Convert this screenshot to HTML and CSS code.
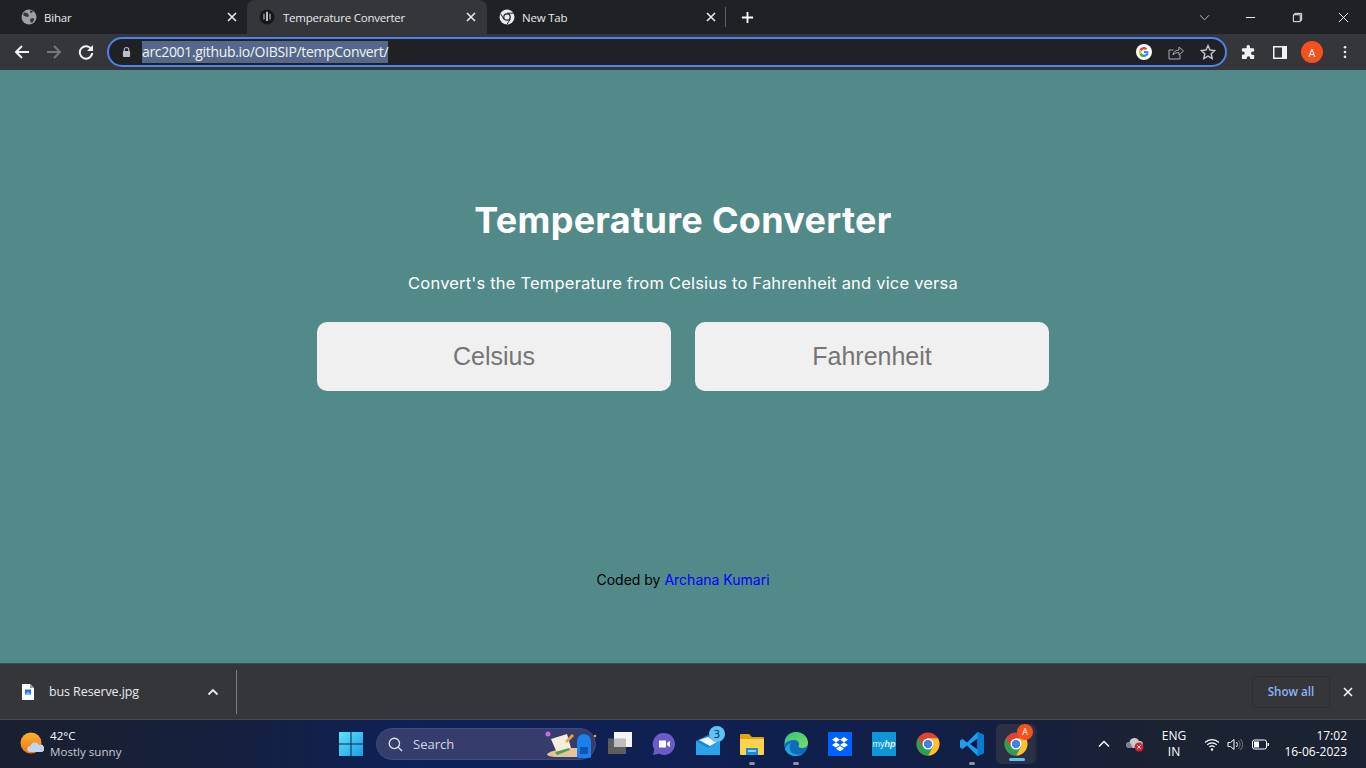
FILE: index.html
```html
<!DOCTYPE html>
<html lang="en">
<head>
    <meta charset="UTF-8">
    <meta name="viewport" content="width=device-width, initial-scale=1.0">
    <title>Temperature Converter</title>
    <link rel="stylesheet" href="styles.css">
</head>
<body>
    <svg class="defs" width="0" height="0" aria-hidden="true">
        <symbol id="chrome" viewBox="0 0 48 48">
            <circle cx="24" cy="24" r="23" fill="#db4437"/>
            <path d="M24 47a23 23 0 0 0 19.9-34.5H24l-2 0 10 17z" fill="#fbc02d"/>
            <path d="M4.1 12.5A23 23 0 0 0 24 47l10-17.5H14z" fill="#2e9e4f"/>
            <circle cx="24" cy="24" r="11" fill="#fff"/>
            <circle cx="24" cy="24" r="8.4" fill="#3f83ea"/>
        </symbol>
        <symbol id="close" viewBox="0 0 12 12">
            <path d="M2 2l8 8M10 2l-8 8" fill="none" stroke="currentColor" stroke-width="1.6"/>
        </symbol>
    </svg>

    <!-- tab strip -->
    <div class="tabstrip">
        <div class="tab tab-first">
            <svg class="favicon" viewBox="0 0 16 16">
                <circle cx="8" cy="8" r="7.5" fill="#9aa0a6"/>
                <path d="M3 3.5l3 .5 2 2-1 2-2.500-.5L2 6zM9 10l3-1 1.500 1.500L11 14l-1.500-1z M9 1.500l3 .5-1 2-2-.5z" fill="#35363a"/>
            </svg>
            <span class="tab-title">Bihar</span>
            <svg class="tab-close"><use href="#close"/></svg>
        </div>
        <div class="tab tab-active">
            <svg class="favicon" viewBox="0 0 16 16">
                <circle cx="8" cy="8" r="7.500" fill="#17181a"/>
                <path d="M7 3.500a1 1 0 0 1 2 0V12H7z" fill="#b9bbbd"/>
                <path d="M4 5.500a1 1 0 0 1 2 0v5H4zM10 5.500a1 1 0 0 1 2 0v5h-2z" fill="#6f7174"/>
            </svg>
            <span class="tab-title">Temperature Converter</span>
            <svg class="tab-close"><use href="#close"/></svg>
        </div>
        <div class="tab">
            <svg class="favicon" viewBox="0 0 16 16">
                <circle cx="8" cy="8" r="7.500" fill="#e8eaed"/>
                <circle cx="8" cy="8" r="3.800" fill="#202124"/>
                <circle cx="8" cy="8" r="2.600" fill="#e8eaed"/>
                <path d="M8 4.200h6.500M5 10.500L1.800 5M11.200 10L8 15.500" stroke="#202124" stroke-width="1"/>
            </svg>
            <span class="tab-title">New Tab</span>
            <svg class="tab-close"><use href="#close"/></svg>
        </div>
        <span class="tab-sep"></span>
        <svg class="new-tab" viewBox="0 0 14 14">
            <path d="M7 1v12M1 7h12" stroke="#fff" stroke-width="2"/>
        </svg>
        <div class="window-controls">
            <svg class="win-btn win-chevron" viewBox="0 0 12 12"><path d="M1 3.500l5 5 5-5" fill="none" stroke="#c4c6c9" stroke-width="1"/></svg>
            <svg class="win-btn win-min" viewBox="0 0 12 12"><path d="M1 6h10" stroke="#fff" stroke-width="1"/></svg>
            <svg class="win-btn win-max" viewBox="0 0 12 12"><path d="M3 3V1.500h7.500V9H9M1.500 3H9v7.500H1.500z" fill="none" stroke="#fff" stroke-width="1"/></svg>
            <svg class="win-btn win-x" viewBox="0 0 12 12"><path d="M1 1l10 10M11 1L1 11" stroke="#fff" stroke-width="1"/></svg>
        </div>
    </div>

    <!-- toolbar -->
    <div class="toolbar">
        <svg class="nav-icon nav-back" viewBox="0 0 16 16"><path d="M15 8H2M8 2L2 8l6 6" fill="none" stroke="#f1f3f4" stroke-width="2"/></svg>
        <svg class="nav-icon nav-forward" viewBox="0 0 16 16"><path d="M1 8h13M8 2l6 6-6 6" fill="none" stroke="#75777a" stroke-width="2"/></svg>
        <svg class="nav-icon nav-reload" viewBox="0 0 16 16"><path d="M13.500 5.500A6.200 6.200 0 1 0 14.200 9" fill="none" stroke="#f1f3f4" stroke-width="2"/><path d="M15 1v6H9z" fill="#f1f3f4"/></svg>
        <div class="omnibox">
            <svg class="lock" viewBox="0 0 10 12"><path d="M2.500 5V3.500a2.500 2.500 0 0 1 5 0V5" fill="none" stroke="#bdc1c6" stroke-width="1.200"/><rect x="1" y="5" width="8" height="6.500" rx="1" fill="#bdc1c6"/></svg>
            <span class="url">arc2001.github.io/OIBSIP/tempConvert/</span>
            <div class="omni-actions">
                <svg class="omni-google" viewBox="0 0 16 16">
                    <circle cx="8" cy="8" r="8" fill="#fff"/>
                    <path d="M12.200 7H8v1.900h2.500c-.3 1-1.200 1.700-2.500 1.700V13c1.500 0 2.700-.5 3.500-1.400.9-1 1.100-3 .7-4.600z" fill="#4285f4"/>
                    <path d="M8 10.600c-1.200 0-2.100-.7-2.500-1.700L3.500 10.400C4.300 12 6 13 8 13z" fill="#34a853"/>
                    <path d="M5.500 8.900c-.2-.6-.2-1.200 0-1.800L3.500 5.600c-.7 1.500-.7 3.300 0 4.800z" fill="#fbbc05"/>
                    <path d="M3.500 5.600l2 1.500C5.900 6.100 6.800 5.400 8 5.400c.7 0 1.300.2 1.800.7l1.500-1.500C10.400 3.600 9.300 3 8 3 6 3 4.300 4 3.500 5.600z" fill="#ea4335"/>
                </svg>
                <svg class="omni-icon" viewBox="0 0 16 16"><path d="M5.500 6H1v9h11v-4" fill="none" stroke="#a9acb0" stroke-width="1"/><path d="M5 11c.5-3.500 3-5 6-5V3l4.500 4-4.500 4V8.500c-2.500 0-4.500.7-6 2.500z" fill="none" stroke="#a9acb0" stroke-width="1"/></svg>
                <svg class="omni-icon" viewBox="0 0 16 16"><path d="M8 1.500l2 4.500 4.800.5-3.600 3.200 1 4.800L8 12.100l-4.200 2.400 1-4.800L1.200 6.500 6 6z" fill="none" stroke="#c4c7ca" stroke-width="1.400"/></svg>
            </div>
        </div>
        <svg class="tool-icon tool-puzzle" viewBox="0 0 16 16"><path d="M6 1.500a1.800 1.800 0 0 1 3.500 0V3.500H13a1 1 0 0 1 1 1V7h-1.500a1.800 1.800 0 0 0 0 3.600H14V14a1 1 0 0 1-1 1H9.800v-1.300a1.800 1.800 0 0 0-3.600 0V15H2a1 1 0 0 1-1-1v-3.500h1.200a1.800 1.800 0 0 0 0-3.600H1V4.500a1 1 0 0 1 1-1h4z" fill="#f1f3f4"/></svg>
        <svg class="tool-icon tool-side" viewBox="0 0 14 13"><path d="M0 0h14v13H0z" fill="#f1f3f4"/><path d="M1.500 1.500h7.500v10H1.500z" fill="#35363a"/></svg>
        <span class="avatar">A</span>
        <svg class="tool-menu" viewBox="0 0 4 16"><circle cx="2" cy="2.500" r="1.500" fill="#e8eaed"/><circle cx="2" cy="8" r="1.500" fill="#e8eaed"/><circle cx="2" cy="13.500" r="1.500" fill="#e8eaed"/></svg>
    </div>

    <!-- page -->
    <main class="page">
        <h1>Temperature Converter</h1>
        <p class="subtitle">Convert's the Temperature from Celsius to Fahrenheit and vice versa</p>
        <div class="inputs">
            <input class="temp-input" type="text" placeholder="Celsius">
            <input class="temp-input" type="text" placeholder="Fahrenheit">
        </div>
        <p class="credit">Coded by <a href="#">Archana Kumari</a></p>
    </main>

    <!-- downloads -->
    <div class="downloads">
        <div class="download-item">
            <svg class="file-icon" viewBox="0 0 12 16">
                <path d="M0 0h8l4 4v12H0z" fill="#fff"/>
                <path d="M8 0l4 4H8z" fill="#9aa0a6"/>
                <path d="M3 5.500h6v5H3z" fill="#1a73e8"/>
                <path d="M3 10.500l3-3 3 3z" fill="#8ab4f8"/>
            </svg>
            <span class="file-name">bus Reserve.jpg</span>
            <svg class="file-chevron" viewBox="0 0 12 8"><path d="M1.500 6.500L6 2l4.500 4.500" fill="none" stroke="#e8eaed" stroke-width="1.800"/></svg>
        </div>
        <button class="show-all">Show all</button>
        <svg class="downloads-close"><use href="#close"/></svg>
    </div>

    <!-- taskbar -->
    <div class="taskbar">
        <div class="weather">
            <svg class="weather-icon" viewBox="0 0 24 24">
                <defs><linearGradient id="sun" x1="0" y1="0" x2="0" y2="1"><stop offset="0" stop-color="#fbb034"/><stop offset="1" stop-color="#ea7a12"/></linearGradient></defs>
                <circle cx="11" cy="11" r="10.500" fill="url(#sun)"/>
                <path d="M10 20a3 3 0 0 1 .5-6 4.500 4.500 0 0 1 8.500-1 3.500 3.500 0 0 1 3 7z" fill="#c3d4ec"/>
            </svg>
            <div class="weather-text">
                <span class="weather-temp">42°C</span>
                <span class="weather-desc">Mostly sunny</span>
            </div>
        </div>

        <div class="task-center">
            <div class="task-cell">
                <svg class="task-icon" viewBox="0 0 24 24">
                    <defs><linearGradient id="win" x1="0" y1="0" x2="1" y2="1"><stop offset="0" stop-color="#5fe3f8"/><stop offset="1" stop-color="#1b9de6"/></linearGradient></defs>
                    <path d="M0 0h11.500v11.500H0zM12.500 0H24v11.500H12.500zM0 12.500h11.500V24H0zM12.500 12.500H24V24H12.500z" fill="url(#win)"/>
                </svg>
            </div>
            <div class="search-pill">
                <svg class="search-glass" viewBox="0 0 16 16"><circle cx="6.800" cy="6.800" r="5.500" fill="none" stroke="#dfe3ee" stroke-width="1.400"/><path d="M10.800 10.800L15 15" stroke="#dfe3ee" stroke-width="1.500"/></svg>
                <span class="search-label">Search</span>
                <svg class="search-art" viewBox="0 0 52 30">
                    <path d="M2 25c6-6 36-8 44-4v7H12C6 28 2 27 2 25z" fill="#e6c592"/>
                    <path d="M6 10l16-5 4 14-14 5z" fill="#f2efe0"/>
                    <path d="M10 23l14-4 1 2-13 5z" fill="#4f9e5c"/>
                    <path d="M20 12l7-7 2 2-7 7z" fill="#f2a13a"/>
                    <path d="M32 12a7 7 0 0 1 14 0v15a2 2 0 0 1-2 2H34a2 2 0 0 1-2-2z" fill="#1d7fe8"/>
                    <path d="M35 18h8v7h-8z" fill="#0f55b5"/>
                    <circle cx="3" cy="5" r="2.500" fill="#c56ce0"/>
                    <circle cx="50" cy="7" r="1.300" fill="#f2a13a"/>
                </svg>
            </div>
            <div class="task-cell task-view">
                <svg class="task-icon" viewBox="0 0 24 24">
                    <path d="M0 6.500h18V22H0z" fill="#5d5d5f"/>
                    <path d="M6 0h18v15H6z" fill="#f4f4f6"/>
                    <path d="M6 6.500h12V15H6z" fill="#bdbdc0"/>
                </svg>
            </div>
            <div class="task-cell">
                <svg class="task-icon" viewBox="0 0 24 24">
                    <path d="M12 1a11 11 0 1 1-5 20.800L1 23l1.300-5.400A11 11 0 0 1 12 1z" fill="#6a5cc4"/>
                    <path d="M7 8.500h7v7H7zM15 11l3-2.300v6.600L15 13z" fill="#fff"/>
                </svg>
            </div>
            <div class="task-cell">
                <svg class="task-icon" viewBox="0 0 24 24">
                    <path d="M0 9L12 3l12 6v14H0z" fill="#1787d8"/>
                    <path d="M3 8l9-3 9 5-7 4z" fill="#f2f6fa"/>
                    <path d="M0 9l12 7 12-7v14H0z" fill="#2ba3ea"/>
                </svg>
                <span class="mail-badge">3</span>
            </div>
            <div class="task-cell">
                <svg class="task-icon" viewBox="0 0 24 24">
                    <path d="M0 3a1 1 0 0 1 1-1h8l3 3h11a1 1 0 0 1 1 1v3H0z" fill="#e0a412"/>
                    <path d="M0 7h24v15a1 1 0 0 1-1 1H1a1 1 0 0 1-1-1z" fill="#fcd34d"/>
                    <path d="M6 16h12v7H6z" fill="#1e8ad6"/>
                    <path d="M8 18h8v2H8z" fill="#8fd0f5"/>
                </svg>
                <span class="running"></span>
            </div>
            <div class="task-cell">
                <svg class="task-icon" viewBox="0 0 24 24">
                    <defs><linearGradient id="edge" x1="0" y1="0" x2="1" y2="1"><stop offset="0" stop-color="#33c481"/><stop offset="1" stop-color="#7be05a"/></linearGradient></defs>
                    <circle cx="12" cy="12" r="12" fill="#0f6cbd"/>
                    <path d="M1 8C3 2 8 0 12 0c7 0 12 5 12 11 0 3-2.500 5-6 5-2 0-4-1-3.500-2 1-1 1-6-4-6C6 8 3 9 1 12z" fill="url(#edge)"/>
                    <path d="M11 22c-5-1-7-7-4-11-3 1-5 3-6 6 2 5 6 7 11 7 3 0 6-1 8-3-3 2-6 2-9 1z" fill="#1ea5e0"/>
                </svg>
                <span class="running"></span>
            </div>
            <div class="task-cell">
                <svg class="task-icon" viewBox="0 0 24 24">
                    <path d="M0 0h24v24H0z" fill="#0061fe"/>
                    <path d="M8 5L4 7.700l4 2.600 4-2.600zM16 5l-4 2.700 4 2.600 4-2.600zM8 10.300L4 13l4 2.600 4-2.600zM16 10.300L12 13l4 2.600 4-2.600zM8 16.700l4 2.600 4-2.600-4-2.600z" fill="#fff"/>
                </svg>
            </div>
            <div class="task-cell">
                <div class="myhp">my<em>hp</em></div>
            </div>
            <div class="task-cell">
                <svg class="task-icon"><use href="#chrome"/></svg>
            </div>
            <div class="task-cell">
                <svg class="task-icon" viewBox="0 0 24 24">
                    <path d="M17.500 0L24 3v18l-6.500 3L7 13.500l-4.500 3.500L0 15.500v-7L2.500 7 7 10.500z" fill="#1f9cf0"/>
                    <path d="M17.500 6.500L10 12l7.500 5.500z" fill="#0b1a45"/>
                    <path d="M17.500 0L24 3v18l-6.500 3z" fill="#0a7cd0"/>
                </svg>
                <span class="running"></span>
            </div>
            <div class="task-cell task-active">
                <svg class="task-icon"><use href="#chrome"/></svg>
                <span class="chrome-badge">A</span>
                <span class="running running-active"></span>
            </div>
        </div>

        <div class="tray">
            <svg class="tray-chevron" viewBox="0 0 12 8"><path d="M1 6.500L6 1.500l5 5" fill="none" stroke="#fff" stroke-width="1.400"/></svg>
            <svg class="tray-cloud" viewBox="0 0 18 16">
                <path d="M3 12a3 3 0 0 1 .5-6A5 5 0 0 1 13 5a3.500 3.500 0 0 1 1 7z" fill="#c7c9cd"/>
                <path d="M3 12a3 3 0 0 1 .5-6L7 12z" fill="#7d7f84"/>
                <circle cx="13" cy="11" r="4.500" fill="#d9202f"/>
                <path d="M11.300 9.300l3.400 3.400M14.700 9.300l-3.400 3.400" stroke="#fff" stroke-width="1"/>
            </svg>
            <div class="tray-lang"><span>ENG</span><span>IN</span></div>
            <svg class="tray-wifi" viewBox="0 0 16 13"><path d="M1 4.500a10 10 0 0 1 14 0M3.200 6.800a7 7 0 0 1 9.600 0M5.400 9a4 4 0 0 1 5.200 0" fill="none" stroke="#fff" stroke-width="1.100"/><circle cx="8" cy="11.500" r="1.200" fill="#fff"/></svg>
            <svg class="tray-sound" viewBox="0 0 16 13"><path d="M1 4.500h2.500L7 1.500v10L3.500 8.500H1z" fill="none" stroke="#fff" stroke-width="1"/><path d="M9.500 4a4 4 0 0 1 0 5" fill="none" stroke="#fff" stroke-width="1"/><path d="M11.500 2.500a6.500 6.500 0 0 1 0 8M13.500 1a9 9 0 0 1 0 11" fill="none" stroke="#77797e" stroke-width="1"/></svg>
            <svg class="tray-battery" viewBox="0 0 17 11"><rect x=".5" y="1" width="14" height="9" rx="2" fill="none" stroke="#fff"/><rect x="2" y="2.500" width="5" height="6" fill="#fff"/><path d="M15.500 4H17v3h-1.500z" fill="#fff"/></svg>
            <div class="tray-clock"><span>17:02</span><span>16-06-2023</span></div>
        </div>
    </div>
</body>
</html>
```

FILE: styles.css
```css
* {
    box-sizing: border-box;
}

html, body {
    margin: 0;
    height: 768px;
    overflow: hidden;
}

body {
    display: flex;
    flex-direction: column;
    font-family: "Open Sans", "Noto Sans", sans-serif;
    color: #fff;
    background-color: #528a8a;
}

.defs {
    position: absolute;
}

/* tab strip */
.tabstrip {
    display: flex;
    align-items: center;
    height: 34px;
    background-color: #202124;
    flex: none;
}

.tab {
    display: flex;
    align-items: center;
    width: 240px;
    height: 34px;
    padding: 0 10px 0 12px;
    font-size: 11.5px;
    letter-spacing: -0.22px;
    color: #e8eaed;
}

.tab-first {
    width: 247px;
    padding-left: 21px;
    padding-right: 9px;
}

.tab-active {
    background-color: #35363a;
    border-radius: 8px 8px 0 0;
}

.favicon {
    width: 16px;
    height: 16px;
    flex: none;
    margin-right: 7px;
}

.tab-active .favicon {
    margin-right: 8px;
}

.tab-title {
    flex: 1;
    white-space: nowrap;
}

.tab-close {
    width: 12px;
    height: 12px;
    color: #e8eaed;
    flex: none;
}

.tab-sep {
    width: 1px;
    height: 20px;
    background-color: #5f6368;
    margin-left: -2px;
}

.new-tab {
    width: 13px;
    height: 13px;
    margin-left: 15px;
}

.window-controls {
    display: flex;
    align-items: center;
    margin-left: auto;
}

.win-btn {
    width: 11px;
    height: 11px;
}

.win-chevron {
    margin-right: 35px;
}

.win-min {
    margin-right: 36px;
}

.win-max {
    margin-right: 35px;
}

.win-x {
    margin-right: 17px;
}

/* toolbar */
.toolbar {
    display: flex;
    align-items: center;
    height: 36px;
    padding-left: 14px;
    background-color: #35363a;
    flex: none;
}

.nav-icon {
    width: 16px;
    height: 16px;
    flex: none;
}

.nav-forward {
    margin-left: 16px;
}

.nav-reload {
    margin-left: 16px;
}

.omnibox {
    display: flex;
    align-items: center;
    width: 1120px;
    height: 30px;
    margin-left: 13px;
    padding-left: 13px;
    background-color: #202124;
    border: 2px solid #4b84ea;
    border-radius: 15px;
}

.lock {
    width: 9px;
    height: 12px;
    flex: none;
}

.url {
    margin-left: 11px;
    padding: 1px 0;
    font-size: 14px;
    line-height: 20px;
    letter-spacing: -0.33px;
    white-space: nowrap;
    color: #f1f3f4;
    background-color: #56688a;
}

.omni-actions {
    display: flex;
    align-items: center;
    gap: 16px;
    margin-left: auto;
    padding-right: 9px;
}

.omni-google {
    width: 16px;
    height: 16px;
}

.omni-icon {
    width: 16px;
    height: 16px;
}

.tool-icon {
    flex: none;
}

.tool-puzzle {
    width: 15px;
    height: 15px;
    margin-left: 14px;
}

.tool-side {
    width: 14px;
    height: 13px;
    margin-left: 17px;
}

.avatar {
    display: flex;
    align-items: center;
    justify-content: center;
    width: 22px;
    height: 22px;
    margin-left: 14px;
    border-radius: 50%;
    background-color: #f4511e;
    font-size: 11px;
    flex: none;
}

.tool-menu {
    width: 4px;
    height: 14px;
    margin-left: 20px;
    flex: none;
}

/* page */
.page {
    display: flex;
    flex-direction: column;
    align-items: center;
    flex: 1;
    padding-top: 128px;
    background-color: #528a8a;
    border-bottom: 1px solid #3f4a4a;
}

h1 {
    margin: 0;
    font-family: "Inter", "Open Sans", sans-serif;
    font-size: 36px;
    line-height: 44px;
    font-weight: 700;
    letter-spacing: 0.3px;
    color: #fff;
}

.subtitle {
    margin: 29px 0 0;
    font-family: "Inter", "Open Sans", sans-serif;
    font-size: 16.5px;
    line-height: 24px;
    font-weight: 400;
    letter-spacing: 0.2px;
    color: #fff;
}

.inputs {
    display: flex;
    gap: 24px;
    margin-top: 27px;
}

.temp-input {
    width: 354px;
    height: 69px;
    padding: 0;
    border: none;
    border-radius: 10px;
    background-color: #f0f0f0;
    font-family: "Liberation Sans", Arial, sans-serif;
    font-size: 25px;
    text-align: center;
}

.credit {
    margin: 179px 0 0;
    font-family: "Inter", "Open Sans", sans-serif;
    font-size: 14px;
    line-height: 20px;
    color: #000;
}

.credit a {
    color: #00f;
    text-decoration: none;
}

/* downloads */
.downloads {
    display: flex;
    align-items: center;
    height: 56px;
    background-color: #35363a;
    border-bottom: 1px solid #47484c;
    flex: none;
}

.download-item {
    display: flex;
    align-items: center;
    width: 237px;
    height: 44px;
    padding-left: 22px;
    border-right: 1px solid #7a7c80;
}

.file-icon {
    width: 12px;
    height: 16px;
    flex: none;
}

.file-name {
    margin-left: 15px;
    font-size: 12.5px;
    letter-spacing: -0.1px;
    color: #e8eaed;
    white-space: nowrap;
}

.file-chevron {
    width: 12px;
    height: 8px;
    margin-left: auto;
    margin-right: 17px;
}

.show-all {
    width: 78px;
    height: 32px;
    margin-left: auto;
    padding: 0;
    background: none;
    border: 1px solid #2e2f33;
    border-radius: 4px;
    font-family: "Open Sans", sans-serif;
    font-size: 11.6px;
    font-weight: 600;
    color: #8ab4f8;
}

.downloads-close {
    width: 12px;
    height: 12px;
    margin-left: 12px;
    margin-right: 12px;
    color: #f1f3f4;
}

/* taskbar */
.taskbar {
    display: flex;
    align-items: center;
    height: 48px;
    background: linear-gradient(90deg, #1a202e 0%, #152040 18%, #0e2158 30%, #0f2050 55%, #131f42 72%, #1b2232 85%, #1b2232 100%);
    flex: none;
}

.weather {
    display: flex;
    align-items: center;
    width: 329px;
    padding-left: 20px;
}

.weather-icon {
    width: 24px;
    height: 24px;
    flex: none;
}

.weather-text {
    display: flex;
    flex-direction: column;
    margin-left: 6px;
    font-size: 11.6px;
    line-height: 16px;
}

.weather-desc {
    color: #c8cad0;
}

.task-center {
    display: flex;
    align-items: center;
    height: 48px;
}

.task-cell {
    position: relative;
    display: flex;
    align-items: center;
    justify-content: center;
    width: 44px;
    height: 48px;
}

.task-view {
    margin-left: 2px;
}

.task-icon {
    width: 24px;
    height: 24px;
}

.search-pill {
    display: flex;
    align-items: center;
    width: 220px;
    height: 32px;
    margin-left: 3px;
    padding-left: 11px;
    border-radius: 16px;
    background-color: #343d6c;
    border: 1px solid #414a78;
}

.search-glass {
    width: 15px;
    height: 15px;
    flex: none;
}

.search-label {
    margin-left: 10px;
    font-size: 13px;
    color: #d5d8e4;
}

.search-art {
    width: 52px;
    height: 30px;
    margin-left: auto;
    margin-right: -2px;
}

.mail-badge {
    position: absolute;
    top: 6px;
    right: 5px;
    width: 16px;
    height: 16px;
    border-radius: 50%;
    background-color: #5ec4f5;
    font-size: 11px;
    line-height: 16px;
    text-align: center;
    color: #0b1a45;
}

.running {
    position: absolute;
    bottom: 3px;
    left: 19px;
    width: 6px;
    height: 3px;
    border-radius: 2px;
    background-color: #8d93a3;
}

.running-active {
    left: 13px;
    width: 16px;
    background-color: #5cc1f5;
}

.myhp {
    width: 24px;
    height: 24px;
    background-color: #0f96d7;
    font-family: "Liberation Sans", sans-serif;
    font-size: 9px;
    line-height: 24px;
    text-align: center;
    color: #dff3fc;
}

.myhp em {
    font-weight: 700;
}

.task-active {
    width: 39px;
    height: 40px;
    margin-left: 2px;
    border-radius: 5px;
    background-color: #2a3145;
    box-shadow: 3px 0 0 -1px #222a3d;
}

.chrome-badge {
    position: absolute;
    top: 0;
    right: 2px;
    width: 16px;
    height: 16px;
    border-radius: 50%;
    background-color: #f4511e;
    font-size: 9px;
    line-height: 16px;
    text-align: center;
}

.tray {
    display: flex;
    align-items: center;
    flex: 1;
    font-size: 12px;
}

.tray-chevron {
    width: 12px;
    height: 8px;
    margin-left: 63px;
    flex: none;
}

.tray-cloud {
    width: 18px;
    height: 16px;
    margin-left: 16px;
    flex: none;
}

.tray-lang {
    display: flex;
    flex-direction: column;
    align-items: center;
    width: 30px;
    margin-left: 15px;
    line-height: 16px;
}

.tray-wifi {
    width: 16px;
    height: 13px;
    margin-left: 15px;
    flex: none;
}

.tray-sound {
    width: 16px;
    height: 13px;
    margin-left: 7px;
    flex: none;
}

.tray-battery {
    width: 17px;
    height: 11px;
    margin-left: 9px;
    flex: none;
}

.tray-clock {
    display: flex;
    flex-direction: column;
    align-items: flex-end;
    margin-left: auto;
    margin-right: 19px;
    line-height: 16px;
}
```
